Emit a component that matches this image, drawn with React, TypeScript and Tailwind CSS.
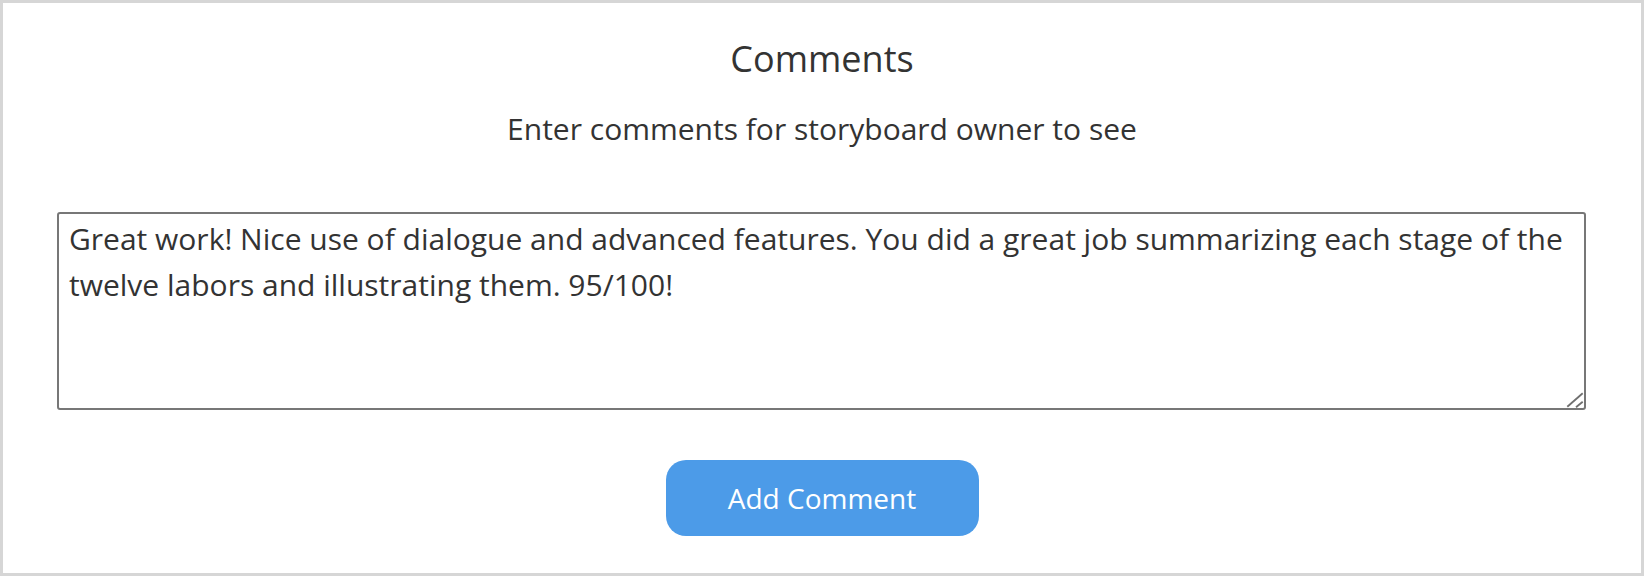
import React from "react";

export default function App() {
  return (
    <div
      className="box-border flex h-[576px] w-full flex-col items-center border-[3px] border-[#d6d6d6] bg-white text-[#333333]"
      style={{ fontFamily: '"Open Sans", "Noto Sans", sans-serif' }}
    >
      <h1 className="mt-[34px] text-[36px] font-normal leading-[44px]">Comments</h1>
      <p className="mt-[28px] text-[30px] leading-[40px]">Enter comments for storyboard owner to see</p>
      <div className="mt-[63px] w-full pl-[54px] pr-[55px]">
        <div className="relative">
          <textarea
            className="box-border block h-[198px] w-full resize-none rounded-[3px] border-2 border-[#777777] bg-white pl-[10px] pr-[10px] pt-[2px] text-[30px] leading-[46px] text-[#333333] outline-none"
            style={{ fontFamily: '"Open Sans", "Noto Sans", sans-serif' }}
            defaultValue="Great work! Nice use of dialogue and advanced features. You did a great job summarizing each stage of the twelve labors and illustrating them. 95/100!"
          />
          <svg
            className="pointer-events-none absolute bottom-[2px] right-[2px]"
            width="18"
            height="18"
            viewBox="0 0 18 18"
          >
            <line x1="1.3" y1="16.7" x2="16.7" y2="3.3" stroke="#6f6f6f" strokeWidth="1.8" />
            <line x1="10" y1="17.3" x2="16.7" y2="11.7" stroke="#6f6f6f" strokeWidth="1.8" />
          </svg>
        </div>
      </div>
      <button
        className="mt-[50px] flex h-[76px] w-[313px] items-center justify-center rounded-[20px] bg-[#4c9be8] text-[28px] text-white"
        style={{ fontFamily: '"Open Sans", "Noto Sans", sans-serif' }}
      >
        Add Comment
      </button>
    </div>
  );
}
